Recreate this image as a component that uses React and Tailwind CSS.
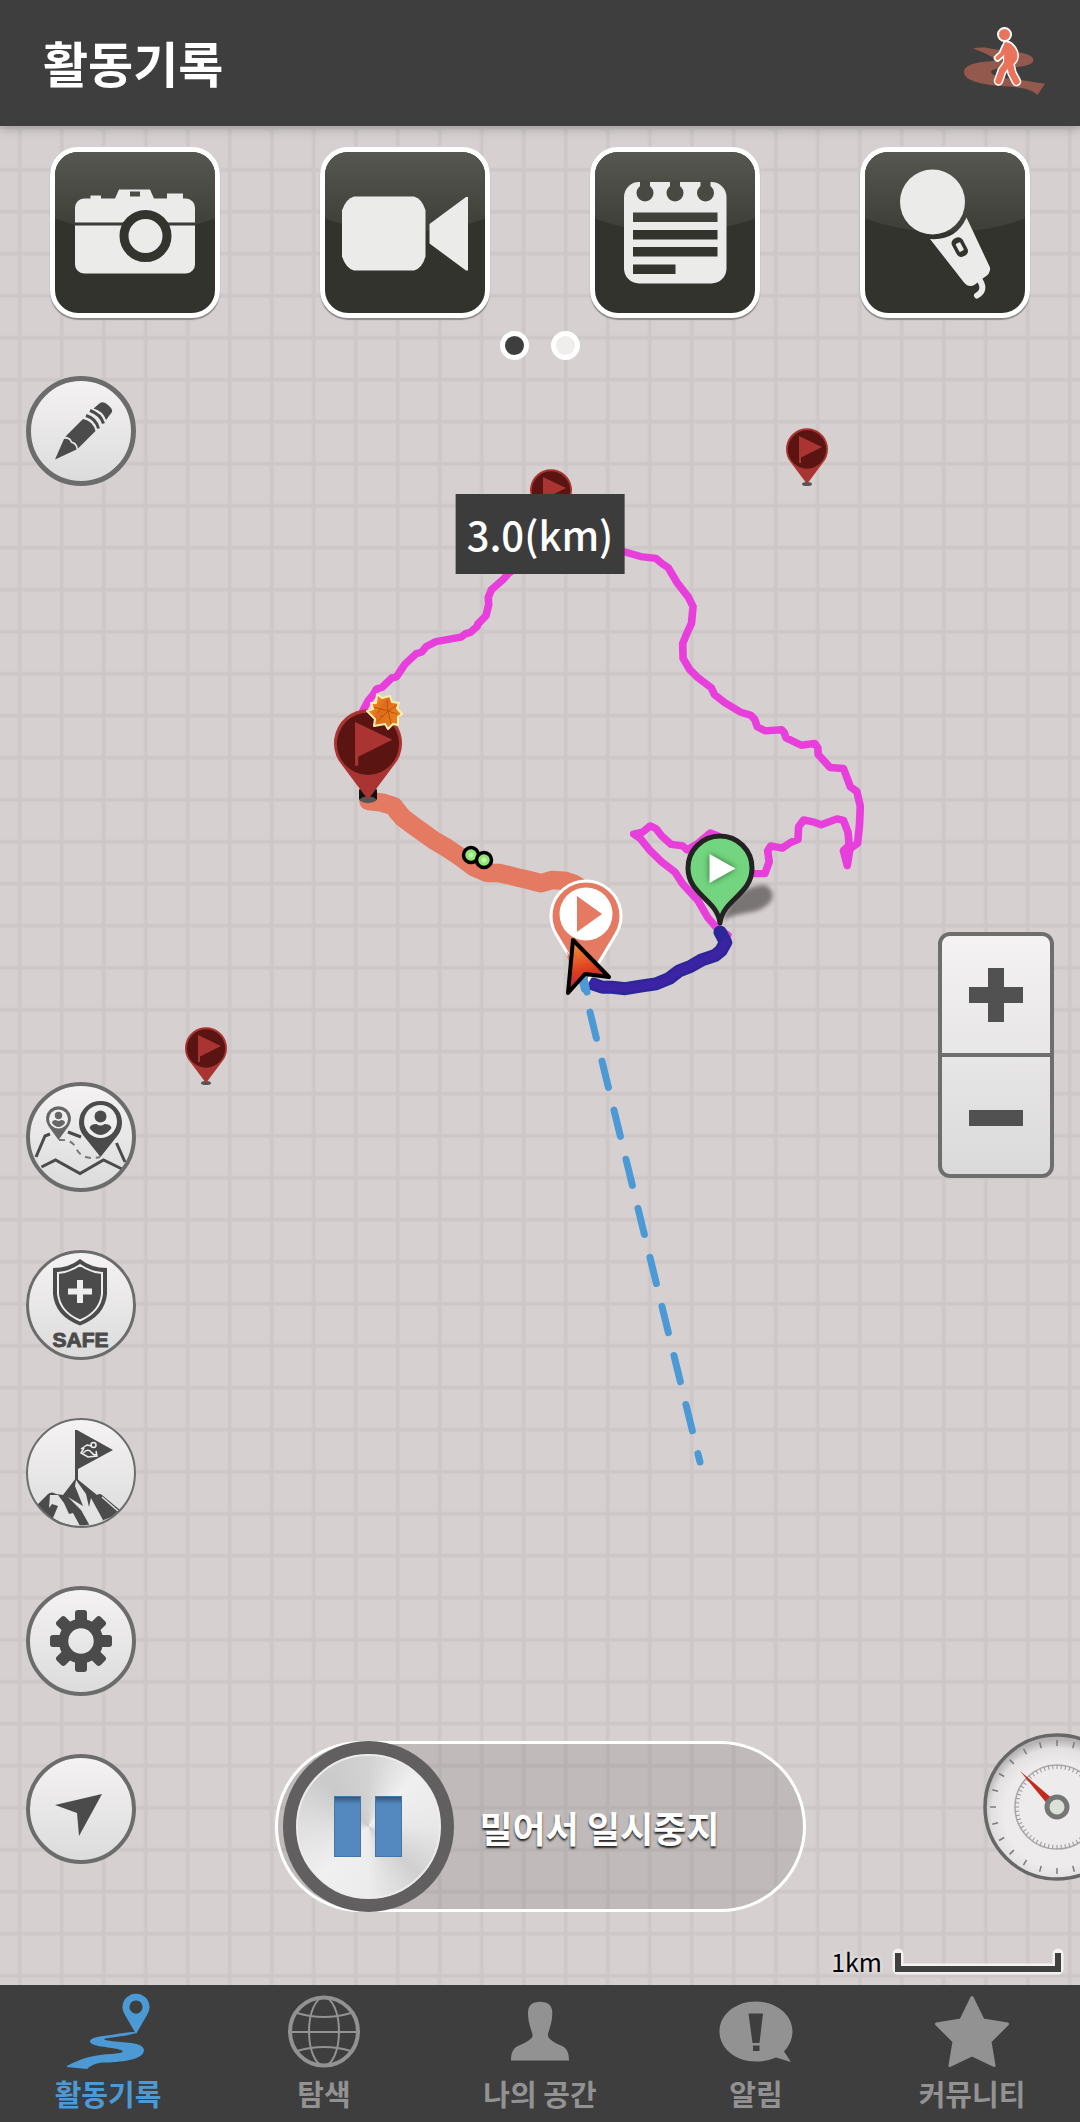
import React from 'react';

const INK = '#4b4b4b';

/* ---------- Media tiles ---------- */

function CameraIcon() {
    return (
        <svg viewBox="0 0 160 160" className="relative h-full w-full">
            <path fill="#ebebea" d="M29 46h6.500v-3h10.500v3h14l4-9h31l4 9h13v-5h16v5h3a9 9 0 0 1 9 9v57a9 9 0 0 1-9 9h-102a9 9 0 0 1-9-9v-57a9 9 0 0 1 9-9z" />
            <rect x="75" y="39" width="10" height="5" fill="#4a4b45" />
            <rect x="20" y="70" width="120" height="3" fill="#3b3c36" />
            <circle cx="90.500" cy="83.500" r="21.500" fill="#ebebea" stroke="#33342e" strokeWidth="9" />
        </svg>
    );
}

function VideoIcon() {
    return (
        <svg viewBox="0 0 160 160" className="relative h-full w-full" fill="#ebebea">
            <path d="M29 44h60q8 2 11.500 14v46q-3.500 12-11.500 14h-60q-8-2-12-14v-46q4-12 12-14z" />
            <path d="M104.500 71.500 141 44.500h2v73.500h-2L104.500 91z" />
        </svg>
    );
}

function NoteIcon() {
    return (
        <svg viewBox="0 0 160 160" className="relative h-full w-full">
            <rect x="29" y="29.500" width="102.500" height="101.500" rx="15" fill="#ebebea" />
            <g fill="#484943">
                {[50, 80, 110.5].map((x) => (
                    <g key={x}>
                        <rect x={x - 5} y="28" width="10" height="10" />
                        <circle cx={x} cy="40.500" r="8.500" />
                    </g>
                ))}
            </g>
            <g fill="#33342e">
                <rect x="38" y="60" width="84.500" height="9.500" fill="#40413b" />
                <rect x="38" y="77.500" width="84.500" height="9.500" />
                <rect x="38" y="94.500" width="84.500" height="9.500" />
                <rect x="38" y="112" width="42.500" height="9.500" />
            </g>
        </svg>
    );
}

function MicIcon() {
    return (
        <svg viewBox="0 0 160 160" className="relative h-full w-full" fill="#ebebea">
            <circle cx="67.500" cy="49.500" r="32.500" />
            <path d="M101.500 65 125 115q1 6-6 10l-9 7q-6 4-11-2L65 86.500q26 2 36.500-21.500z" />
            <g transform="rotate(-28 95 95)">
                <rect x="89" y="84.500" width="12" height="20" rx="5" fill="#33342e" />
                <rect x="92.500" y="90" width="5" height="9" rx="1" />
            </g>
            <path d="M115 128q6 10-3 15" fill="none" stroke="#ebebea" strokeWidth="6" strokeLinecap="round" />
        </svg>
    );
}

const mediaTiles = [
    { label: '사진', Icon: CameraIcon },
    { label: '동영상', Icon: VideoIcon },
    { label: '메모', Icon: NoteIcon },
    { label: '음성', Icon: MicIcon },
];

function MediaTile({ label, Icon }) {
    return (
        <button
            aria-label={label}
            className="relative h-[171px] w-[170px] overflow-hidden rounded-[28px] border-[5px] border-white bg-[#32332d] shadow-[0_2px_1px_#8d8988]"
        >
            <span className="absolute -inset-x-16 -top-20 h-[160px] rounded-b-[50%] bg-linear-to-b from-[#565751] from-50% to-[#3d3e38]" />
            <Icon />
        </button>
    );
}

/* ---------- Round buttons ---------- */

function PencilIcon() {
    return (
        <g fill={INK}>
            <path d="M29 83.500 38 63q5-1 7 4 5 1 5.500 6.500z" />
            <path d="M39.500 60.500 57 43q10 2 12.500 12L52 72.500q-1-6-6-7-1-4-6.500-5z" />
            <path d="M60 39.500q10 3 12.500 13M64 34.500q11 4 13.500 13" fill="none" stroke={INK} strokeWidth="3" />
            <path d="M67.500 32.500 74 27q4-2 8 2 5 4 4 7l-6 8q-3-9-12.500-11.500z" />
        </g>
    );
}

function FriendsMapIcon() {
    return (
        <g fill="none" stroke={INK} strokeWidth="3">
            <path d="M10 75 19 54l5-2M42 50l13 5M90.500 61 99 80M15.500 85 29.500 78 54 91.500 77.500 78 96 87" />
            <path d="M33 58q13-1 17 8 6 13 24 9" stroke="#777" strokeWidth="2" strokeDasharray="6 5" />
            <path d="M32.500 58 22 43.500a12.500 12.500 0 1 1 21 0z" fill="#666" stroke="none" />
            <circle cx="32.500" cy="37" r="9.500" fill="#eee" stroke="none" />
            <circle cx="32.500" cy="33.500" r="3.700" fill="#666" stroke="none" />
            <path d="M26 41q0-3 4-3 2.500 2 5 0 4 0 4 3-3 4-6.500 4t-6.500-4z" fill="#666" stroke="none" />
            <path d="M74.500 75 57 53a21.500 21.500 0 1 1 35 0z" fill={INK} stroke="none" />
            <circle cx="74.500" cy="39.500" r="16.500" fill="#eee" stroke="none" />
            <circle cx="74.500" cy="34.500" r="6" fill={INK} stroke="none" />
            <path d="M63.500 46q1-4 7-4 4 3 8 0 6 0 7 4-5 7-11 7t-11-7z" fill={INK} stroke="none" />
        </g>
    );
}

function SafeIcon() {
    return (
        <g fill={INK}>
            <path d="M54 9q11 9 27 9v26q-2 22-27 31.500Q29 66 27 44V18q16 0 27-9z" />
            <path d="M54 15q10 7 22 8v21q-2 18-22 26.500Q34 62 32 44V23q12-1 22-8z" fill="none" stroke="#eee" strokeWidth="2" />
            <path d="M51 30h6v8.500h9v6h-9V53h-6v-8.500h-9v-6h9z" fill="#eee" />
            <text x="54.500" y="97" textAnchor="middle" stroke={INK} strokeWidth="1" className="font-['Liberation_Sans',sans-serif] text-[21px] font-bold">SAFE</text>
        </g>
    );
}

function SummitIcon() {
    return (
        <g fill={INK}>
            <path d="M49 12h2l36 20-35 19v11h-3z" />
            <path d="M55 31l6-4 5 1M70 33l1 5-9 1-7-4 3-5M57 35q5-5 8-1t6 2" fill="none" stroke="#eee" strokeWidth="1.500" />
            <circle cx="67.500" cy="27" r="2.500" fill="none" stroke="#eee" strokeWidth="1.500" />
            <path d="M11 87 22 76q4-3 8 0l7 1 13-17 21 17q3-2 5 0l18 15-9 7-12 5q-17 6-40 2Q19 98 11 87z" />
            <path d="M24 77l8 0 6 8 5 11 4-1 7 13q-15 0-27-8l5-12-6-2-3 4z" fill="#e4e3e4" />
            <path d="M50 62l10 14 3 13 2-9 12 22q-5 5-13 6L55 92 42 79l15 9-8-20z" fill="#e4e3e4" />
            <path d="M76 79 92 93" stroke="#e4e3e4" strokeWidth="1.500" />
        </g>
    );
}

function GearIcon() {
    return (
        <g fill={INK}>
            {[0, 45, 90, 135, 180, 225, 270, 315].map((a) => (
                <rect key={a} x="49" y="24" width="12" height="16" rx="3" transform={`rotate(${a} 55 55)`} />
            ))}
            <circle cx="55" cy="55" r="17.500" fill="none" stroke={INK} strokeWidth="9.500" />
        </g>
    );
}

function LocateIcon() {
    return <path d="M76 40 53 82l-2-23-22-8z" fill={INK} />;
}

const sideButtons = [
    { label: '친구 위치', Icon: FriendsMapIcon, border: 'border-4' },
    { label: '안전', Icon: SafeIcon, border: 'border-3' },
    { label: '정상 인증', Icon: SummitIcon, border: 'border-2' },
    { label: '설정', Icon: GearIcon, border: 'border-4' },
    { label: '현재 위치', Icon: LocateIcon, border: 'border-4' },
];

function RoundButton({ label, Icon, border }) {
    return (
        <button aria-label={label} className="relative size-[110px] shrink-0 rounded-full bg-linear-to-b from-[#f5f3f4] to-[#dcdbdc]">
            <svg viewBox="0 0 110 110" className="h-full w-full">
                <Icon />
            </svg>
            <span className={`absolute inset-0 rounded-full border-[#6c6c6c] ${border}`} />
        </button>
    );
}

/* ---------- Map ---------- */

function FlagPin({ x, y, scale = 1 }) {
    return (
        <g transform={`translate(${x} ${y}) scale(${scale})`}>
            <ellipse cx="0" cy="35" rx="5" ry="2" fill="#555" />
            <path d="M0 35 -18 11A21 21 0 1 1 18 11z" fill="#a93431" />
            <circle cy=".5" r="19.200" fill="#5a1513" />
            <path d="M-8-13 15-2-6 8.500V14h-2z" fill="#a93431" />
        </g>
    );
}

function TrackMap() {
    return (
        <svg viewBox="0 126 1080 1859" preserveAspectRatio="xMidYMin slice" className="absolute inset-0 h-full w-full">
            <defs>
                <linearGradient id="cursor" x1=".2" y1="0" x2=".4" y2="1">
                    <stop offset="0" stopColor="#f39a35" />
                    <stop offset=".6" stopColor="#dc3a20" />
                    <stop offset="1" stopColor="#a81f5c" />
                </linearGradient>
                <linearGradient id="leaf" x1="0" y1="0" x2="1" y2=".6">
                    <stop offset="0" stopColor="#f6b02c" />
                    <stop offset=".5" stopColor="#e06a1a" />
                    <stop offset="1" stopColor="#e9821f" />
                </linearGradient>
            </defs>

            <FlagPin x={807} y={449} />
            <FlagPin x={551} y={490} />
            <FlagPin x={206} y={1048} />

            {/* Tracks */}
            <g transform="translate(300 440) scale(.3827 .37)" fill="none" strokeLinecap="round" strokeLinejoin="round">
                <path
                    stroke="#e83fdc"
                    strokeWidth="20"
                    d="M165 730 178 705 190 690 200 673 215 668 240 643 252 640 260 628 275 605 303 578 318 573 330 558 355 545 420 533 432 524 445 520 462 505 465 497 486 475 493 445 492 425 500 405 530 378 545 360 620 310 840 300 890 315 930 320 945 333 962 345 985 385 1015 425 1027 450 1023 495 1012 520 1000 550 1001 590 1018 620 1037 640 1075 670 1083 688 1110 710 1150 735 1178 744 1188 755 1195 775 1215 786 1258 783 1265 790 1270 805 1310 825 1345 820 1353 832 1354 850 1385 885 1420 888 1430 915 1438 937 1455 950 1464 990 1462 1040 1457 1090 1437 1105 1430 1150 1420 1110 1435 1095 1432 1060 1420 1028 1403 1024 1362 1040 1340 1032 1316 1027 1303 1045 1301 1080 1283 1087 1260 1103 1230 1097 1222 1110 1226 1140 1215 1172 1180 1172 1120 1120 1092 1070 1072 1062 1040 1090 1012 1108 1000 1097 970 1093 945 1070 930 1050 915 1043 895 1060 872 1065 890 1078 915 1110 945 1140 980 1168 1000 1200 1040 1245 1065 1290 1090 1320 1118 1338"
                />
                <path stroke="#e47a62" strokeWidth="50" d="M180 976 215 980 245 990 258 1008 270 1022 300 1045 320 1060 350 1082 380 1100 405 1117 430 1135 455 1155 490 1170 518 1170 545 1176 575 1184 600 1190 630 1198 660 1189 690 1191 712 1198 725 1205 740 1250 722 1390" />
                <path stroke="#2b2799" strokeWidth="35" d="M1098 1330 1112 1358 1100 1380 1085 1393 1068 1399 1050 1405 1020 1423 990 1435 965 1455 930 1470 890 1476 850 1483 815 1479 790 1479 765 1470" />
                <path stroke="#3b23a4" strokeWidth="22" d="M1112 1358 1100 1380 1085 1393 1068 1399 1050 1405 1020 1423 990 1435 965 1455 930 1470 890 1476 850 1483 815 1479 790 1479 765 1470" />
            </g>
            <path d="M578 963 700 1462" fill="none" stroke="#4b9ad5" strokeWidth="7" strokeLinecap="round" strokeDasharray="27 23.500" />

            <rect x="359" y="788" width="18" height="13" rx="3" fill="#111" />
            <FlagPin x={368} y={743} scale={1.62} />
            <path
                d="M377 694 382 698 390 696 392 702 399 703 397 708 402 714 398 717 398 725 393 724 388 729 385 724 374 726 375 719 367 711 373 709 371 703 376 703z"
                fill="url(#leaf)"
                stroke="#fdf0b0"
                strokeWidth="2"
                strokeLinejoin="round"
            />
            <path d="M397 705 388 711 387 700M388 711 374 707M388 711 378 721M388 711 391 724M388 711 397 714M381 709l-4 4M384 716l-4 0" stroke="#b8540f" fill="none" />

            {[[471, 855], [484, 860]].map(([x, y]) => (
                <g key={x}>
                    <circle cx={x} cy={y} r="7.500" fill="#91e574" stroke="#000" strokeWidth="3.500" />
                    <circle cx={x} cy={y} r="2.500" fill="#bdf5a8" />
                </g>
            ))}

            {/* Start marker */}
            <path d="M723 921C728 900 742 886 765 885 778 892 774 905 756 911 744 914 732 914 723 921z" fill="#4a4645" opacity=".65" className="blur-[2px]" />
            <path d="M720 923C717 899 688 895 688 868A32 32 0 0 1 752 868C752 895 723 899 720 923z" fill="#74d580" stroke="#232323" strokeWidth="5" strokeLinejoin="round" />
            <path d="M709.500 854v29l26-14.500z" fill="#fff" className="drop-shadow-[0_0_3px_#2a6b35]" />

            {/* Current marker */}
            <path d="M586 984 556 934A35 35 0 1 1 616 934z" fill="#e47a62" stroke="#fff" strokeWidth="3" />
            <path d="M567 951l3 20 16 14z" fill="#e47a62" />
            <circle cx="586" cy="914" r="26.500" fill="#fff" />
            <path d="M577 896v36l25-18z" fill="#e47a62" />
            <path d="M583 973l4 19" stroke="#4b9ad5" strokeWidth="7" strokeLinecap="round" />
            <path d="M573 940 609 977 585 974 568 993z" fill="url(#cursor)" stroke="#000" strokeWidth="4" strokeLinejoin="round" />
        </svg>
    );
}

function ZoomControl() {
    return (
        <div className="flex w-[116px] flex-col overflow-hidden rounded-xl border-4 border-[#6e6e6e] bg-linear-to-b from-[#f4f2f3] to-[#dbdadb]">
            <button aria-label="확대" className="flex h-[121px] items-center justify-center border-b-4 border-[#6e6e6e]">
                <svg viewBox="0 0 54 54" className="size-[54px]" fill="#515151">
                    <path d="M19 0h16v19h19v16H35v19H19V35H0V19h19z" />
                </svg>
            </button>
            <button aria-label="축소" className="flex h-[117px] items-center justify-center pt-1">
                <svg viewBox="0 0 54 16" className="h-4 w-[54px]" fill="#515151">
                    <path d="M0 0h54v16H0z" />
                </svg>
            </button>
        </div>
    );
}

function Gauge() {
    const ticks = Array.from({ length: 24 }, (_, i) => i * 15);
    const fine = Array.from({ length: 60 }, (_, i) => i * 6);
    return (
        <svg viewBox="0 0 148 148" className="size-[148px] shrink-0">
            <defs>
                <radialGradient id="dial" cx=".5" cy=".55" r=".52">
                    <stop offset=".7" stopColor="#edebec" />
                    <stop offset=".88" stopColor="#e2e0e1" />
                    <stop offset="1" stopColor="#b5b3b3" />
                </radialGradient>
            </defs>
            <circle cx="74" cy="74" r="72" fill="url(#dial)" stroke="#676767" strokeWidth="3.500" />
            {ticks.map((a) => (
                <path key={a} d="M74 7v6" stroke="#7d7b7b" strokeWidth="1.500" transform={`rotate(${a} 74 74)`} />
            ))}
            <circle cx="74" cy="74" r="42" fill="none" stroke="#aaa" strokeWidth="1.500" />
            {fine.map((a) => (
                <path key={a} d="M74 32v4" stroke="#999" transform={`rotate(${a} 74 74)`} />
            ))}
            <path d="M37 38 71 67l-5 6z" fill="#c6291f" />
            <circle cx="74" cy="74" r="10" fill="#dde0da" stroke="#757775" strokeWidth="5" />
        </svg>
    );
}

function ScaleBar() {
    return (
        <div className="flex items-center gap-2">
            <span className="text-[25px] leading-8 font-normal text-black [text-shadow:0_0_4px_#fff]">1km</span>
            <svg viewBox="0 0 174 28" className="h-7 w-[174px]" fill="none">
                <path d="M8 7v15h160V7" stroke="#f3f1f1" strokeWidth="11" strokeLinecap="round" strokeLinejoin="round" />
                <path d="M8 6v16h160V6" stroke="#404040" strokeWidth="6" />
            </svg>
        </div>
    );
}

function PauseSlider() {
    return (
        <button className="flex h-[171px] w-[531px] items-center rounded-full border-3 border-white bg-black/10 pl-[5px]">
            <span className="flex size-[171px] shrink-0 items-center justify-center rounded-full bg-[#615f5f]">
                <span className="flex size-[145px] items-center justify-center gap-[14px] rounded-full border-2 border-[#ececec] bg-[conic-gradient(#d2d2d2,#f0f0f0_12%,#e8e8e8_25%,#d0d0d0_37%,#ececec_50%,#f0f0f0_62%,#e0e0e0_75%,#cacaca_88%,#d2d2d2)]">
                    <span className="h-[61px] w-[27px] border border-[#4376a9] bg-linear-to-b from-[#35577d] to-[#5489bf] to-12%" />
                    <span className="h-[61px] w-[27px] border border-[#4376a9] bg-linear-to-b from-[#35577d] to-[#5489bf] to-12%" />
                </span>
            </span>
            <span className="ml-[26px] text-[36px] leading-none font-bold whitespace-nowrap text-white [text-shadow:0_2px_2px_#222]">밀어서 일시중지</span>
        </button>
    );
}

/* ---------- Header / tab bar ---------- */

function WalkerIcon() {
    return (
        <svg viewBox="0 0 82 70" className="h-[70px] w-[82px]" strokeLinecap="round" strokeLinejoin="round">
            <path d="M9 22.500C18 21 24 21.500 28 23 50 25 69.500 27 69.500 34 69 40 55 41 44 41.500 36 42 27 43 27 46 28 50 38 52 50 53 65 55 74 57 81 57.500L73.500 69C66 61 50 61 36 60 14 58 0 54 0 46 0 37 20 35 36 35 30 33 25 28 9 22.500z" fill="#93594c" />
            <circle cx="40.500" cy="8.500" r="6.500" fill="#e9735b" stroke="#fff" strokeWidth="2" />
            <g stroke="#fff" fill="#fff">
                <path d="M41 17C45 15 53 22 53 30 53 35 50 37 48 39H41z" strokeWidth="4" />
                <path d="M41 21 38 28 33.500 32" strokeWidth="7.500" fill="none" />
                <path d="M43 38 38 45 34.500 55M46 38 48 47 52.500 55.500" strokeWidth="9.500" fill="none" />
            </g>
            <g stroke="#e9735b" fill="#e9735b">
                <path d="M41 17C45 15 53 22 53 30 53 35 50 37 48 39H41z" strokeWidth="1" />
                <path d="M41 21 38 28 33.500 32" strokeWidth="4" fill="none" />
                <path d="M43 38 38 45 34.500 55M46 38 48 47 52.500 55.500" strokeWidth="6.500" fill="none" />
            </g>
        </svg>
    );
}

function RouteGlyph() {
    return (
        <g fill="currentColor">
            <path fillRule="evenodd" d="M71 41 60 22A13.500 13.500 0 1 1 82 22zM71 7.500a6.500 6.500 0 1 0 .01 0z" />
            <path d="M69 39C60 39 54 41 46 42 35 43 25 44.500 25 48.500 25 53 42 54 50 55.500 58 57 60 58.500 55 60 45 61.500 30 61 16 66.500 10 69 2 72 1.500 74L22 76C26 72 32 69.500 40 69.500 60 69 79 66 79 57 78 50 66 50 50 48.500 42 47.500 37 46.500 40 45.500 48 44 62 43 71 40z" />
        </g>
    );
}

function GlobeGlyph() {
    return (
        <g fill="none" stroke="currentColor" strokeWidth="2">
            <circle cx="43" cy="38.500" r="34" strokeWidth="4" />
            <ellipse cx="43" cy="38.500" rx="15" ry="34" />
            <path d="M9 39h68M16 20q27 8 54 0M16 58q27-8 54 0" />
        </g>
    );
}

function PersonGlyph() {
    return (
        <path
            fill="currentColor"
            d="M14 67.500C14 60 16 55 22 52.500 28 50 35 46 35.500 43 36 39 31 32 31 20 31 12 35 8.700 43 8.700 51 8.700 55.300 12 55.300 20 55.300 32 50.500 39 51 43 51.500 46 58 50 64 52.500 70 55 72 60 72 67.500z"
        />
    );
}

function AlertGlyph() {
    return (
        <g fill="currentColor">
            <path d="M43 8.500C64 8.500 79.500 22 79.500 38.500q0 11-8.500 20l7 10.500-15-4.500q-9 4-20 4C22 68.500 6.500 55 6.500 38.500S22 8.500 43 8.500z" />
            <path d="M35.500 20.500h14.500l-3.500 29.500h-7zM40 52.500h6.500v5.500H40z" fill="#3e3e3e" />
        </g>
    );
}

function StarGlyph() {
    return (
        <path
            fill="currentColor"
            stroke="currentColor"
            strokeWidth="3"
            strokeLinejoin="round"
            d="M43 4.500 54 27 78.500 31 61 48.500 65 72.500 43 62 21 72.500 25 48.500 7.500 31 32 27z"
        />
    );
}

const tabs = [
    { label: '활동기록', Glyph: RouteGlyph, active: true },
    { label: '탐색', Glyph: GlobeGlyph },
    { label: '나의 공간', Glyph: PersonGlyph },
    { label: '알림', Glyph: AlertGlyph },
    { label: '커뮤니티', Glyph: StarGlyph },
];

export default function App() {
    return (
        <div className="flex min-h-screen flex-col overflow-x-hidden bg-[#3e3e3e] font-['Noto_Sans_CJK_KR',sans-serif]">
            <header className="relative z-20 flex h-[126px] shrink-0 items-center justify-between bg-[#3e3e3e] pr-[34px] pb-1 pl-[43px] shadow-[0_0_12px_#8a8686]">
                <h1 className="text-[49px] leading-none font-bold text-white">활동기록</h1>
                <button aria-label="걷기">
                    <WalkerIcon />
                </button>
            </header>

            <main className="relative flex flex-1 flex-col overflow-hidden bg-[#d6d0d0] bg-[linear-gradient(to_right,transparent,#cdc7c7_2px,#cdc7c7_4px,transparent_5px),linear-gradient(to_bottom,transparent,#cdc7c7_2px,#cdc7c7_4px,transparent_5px)] bg-size-[42px_42px] bg-position-[17px_41px] pt-[21px]">
                <TrackMap />
                <div className="absolute top-[368px] left-1/2 flex h-20 -translate-x-1/2 items-center bg-[#3c3c3c] px-[11px] text-[40px] leading-none font-medium text-white">
                    3.0(km)
                </div>

                <div className="relative grid grid-cols-4 justify-items-center">
                    {mediaTiles.map((tile) => (
                        <MediaTile key={tile.label} {...tile} />
                    ))}
                </div>
                <div className="relative mt-[13px] flex justify-center gap-[22px]">
                    <button aria-label="1" className="size-[29px] rounded-full border-5 border-white bg-[#3e3e3e]" />
                    <button aria-label="2" className="size-[29px] rounded-full border-5 border-white bg-[#efeeec]" />
                </div>

                <div className="relative grid flex-1 grid-cols-[1fr_auto_1fr]">
                    <div className="flex flex-col items-start justify-between pt-4 pb-[121px] pl-[26px]">
                        <RoundButton label="경로 편집" Icon={PencilIcon} border="border-5" />
                        <div className="flex flex-col gap-[58px]">
                            {sideButtons.map((button) => (
                                <RoundButton key={button.label} {...button} />
                            ))}
                        </div>
                    </div>

                    <div className="flex items-end pb-[73px]">
                        <PauseSlider />
                    </div>

                    <div className="flex flex-col items-end justify-between pt-[572px] pb-2">
                        <div className="pr-[26px]">
                            <ZoomControl />
                        </div>
                        <div className="flex w-full flex-col gap-16">
                            <div className="-mr-[51px] self-end">
                                <Gauge />
                            </div>
                            <div className="self-end pr-4">
                                <ScaleBar />
                            </div>
                        </div>
                    </div>
                </div>
            </main>

            <nav className="grid shrink-0 grid-cols-5 bg-[#3e3e3e] pt-2 pb-[11px]">
                {tabs.map(({ label, Glyph, active }) => (
                    <a
                        key={label}
                        href="#"
                        aria-current={active ? 'page' : undefined}
                        className={`flex flex-col items-center gap-[6px] ${active ? 'text-[#4c9ad5]' : 'text-[#929292]'}`}
                    >
                        <svg viewBox="0 0 86 76" className="h-[76px] w-[86px]">
                            <Glyph />
                        </svg>
                        <span className="text-[29px] leading-9 font-bold">{label}</span>
                    </a>
                ))}
            </nav>
        </div>
    );
}
